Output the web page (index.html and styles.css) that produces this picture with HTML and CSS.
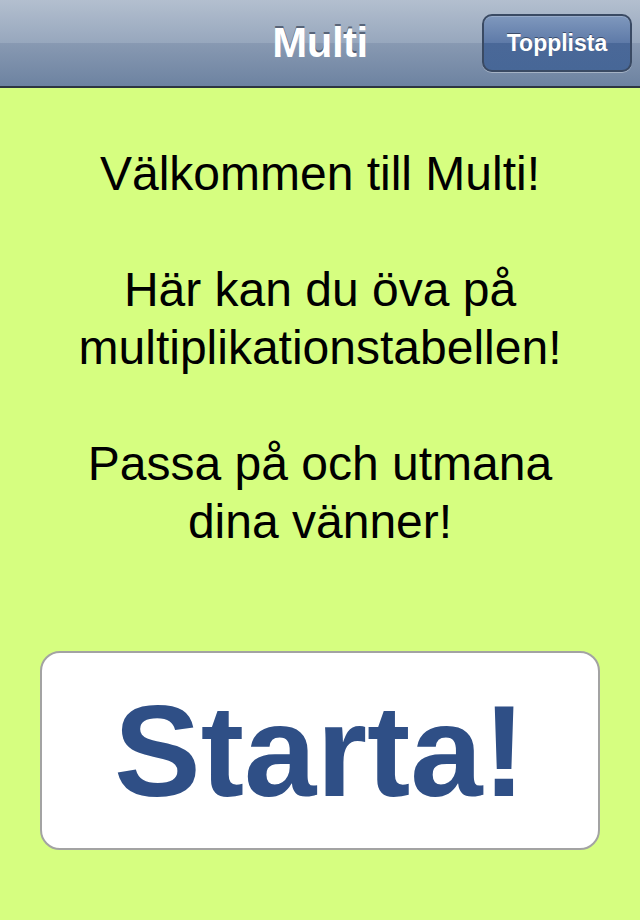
FILE: index.html
```html
<!DOCTYPE html>
<html lang="sv">
<head>
<meta charset="utf-8">
<title>Multi</title>
<link rel="stylesheet" href="styles.css">
</head>
<body>
<div class="screen">
  <header class="navbar">
    <h1 class="nav-title">Multi</h1>
    <button class="nav-btn">Topplista</button>
  </header>
  <main class="content">
    <div class="intro">
      <p>Välkommen till Multi!</p>
      <p>Här kan du öva på<br>multiplikationstabellen!</p>
      <p>Passa på och utmana<br>dina vänner!</p>
    </div>
    <button class="start-btn">Starta!</button>
  </main>
</div>
</body>
</html>
```
FILE: styles.css
```css
html, body {
  margin: 0;
  padding: 0;
}
body {
  width: 640px;
  height: 920px;
  overflow: hidden;
  font-family: "Liberation Sans", Arial, sans-serif;
  background: #d6fe80;
}
.screen {
  display: flex;
  flex-direction: column;
  height: 920px;
}
.navbar {
  position: relative;
  height: 86px;
  border-bottom: 2px solid #2d3642;
  background: linear-gradient(to bottom, #b3bfcf 0%, #97a7bd 50%, #8899b2 50%, #6d83a1 100%);
  display: flex;
  align-items: center;
  justify-content: center;
  flex-shrink: 0;
}
.nav-title {
  margin: 0;
  font-size: 42px;
  font-weight: bold;
  color: #fff;
  text-shadow: 0 -2px 0 rgba(40, 50, 70, 0.6);
  letter-spacing: -0.5px;
}
.nav-btn {
  position: absolute;
  right: 8px;
  top: 14px;
  width: 150px;
  height: 58px;
  border-radius: 10px;
  border: 2px solid #3a4a63;
  background: linear-gradient(to bottom, #7f98bd 0%, #5e7aa8 50%, #4a6898 50%, #476797 100%);
  box-shadow: 0 1px 0 rgba(255,255,255,0.35), inset 0 1px 0 rgba(255,255,255,0.2);
  color: #fff;
  font-family: "Liberation Sans", Arial, sans-serif;
  font-weight: bold;
  font-size: 23px;
  text-shadow: 0 -1px 0 rgba(30, 40, 60, 0.6);
  padding: 0;
}
.content {
  flex: 1;
  display: flex;
  flex-direction: column;
  align-items: center;
}
.intro {
  margin-top: 57px;
  text-align: center;
  font-size: 48px;
  line-height: 58px;
  color: #000;
}
.intro p {
  margin: 0 0 58px 0;
}
.intro p:last-child {
  margin-bottom: 0;
}
.start-btn {
  margin-top: 100px;
  width: 560px;
  height: 199px;
  border: 2px solid #a3a3a3;
  border-radius: 20px;
  background: #fff;
  color: #2f4f86;
  font-family: "Liberation Sans", Arial, sans-serif;
  font-weight: bold;
  font-size: 130px;
  padding: 0;
}
```
